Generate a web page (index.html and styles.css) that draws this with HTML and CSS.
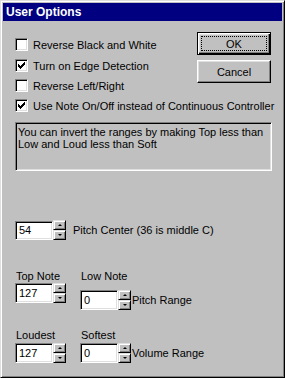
FILE: index.html
```html
<html>
<head>
    <link rel="stylesheet" href="styles.css">
    <title>User Options</title>
</head>
<body>
    <div class="window">
        <div class="title-bar">User Options</div>
        <div class="content">
            <div class="top">
                <div class="options">
                    <div class="option first"><span class="checkbox"></span>Reverse Black and White</div>
                    <div class="option"><span class="checkbox"><svg width="7" height="7" viewBox="0 0 7 7"><path d="M0 2 L2 4 L7 -1 L7 2 L2 7 L0 5 Z" fill="#000"/></svg></span>Turn on Edge Detection</div>
                    <div class="option"><span class="checkbox"></span>Reverse Left/Right</div>
                    <div class="option"><span class="checkbox"><svg width="7" height="7" viewBox="0 0 7 7"><path d="M0 2 L2 4 L7 -1 L7 2 L2 7 L0 5 Z" fill="#000"/></svg></span>Use Note On/Off instead of Continuous Controller</div>
                </div>
                <div class="buttons">
                    <button class="btn btn-default"><span class="focus">OK</span></button>
                    <button class="btn">Cancel</button>
                </div>
            </div>

            <div class="note">You can invert the ranges by making Top less than<br>Low and Loud less than Soft</div>

            <div class="pitch-row">
                <div class="spin-group">
                    <div class="edit">54</div>
                    <div class="spinner"><span class="spin-up"><i class="arrow-up"></i></span><span class="spin-down"><i class="arrow-down"></i></span></div>
                    <span class="trail-label wide">Pitch Center (36 is middle C)</span>
                </div>
            </div>

            <div class="range-row top-row">
                <div class="field">
                    <div class="field-label">Top Note</div>
                    <div class="spin-group">
                        <div class="edit">127</div>
                        <div class="spinner"><span class="spin-up"><i class="arrow-up"></i></span><span class="spin-down"><i class="arrow-down"></i></span></div>
                    </div>
                </div>
                <div class="field field-last">
                    <div class="field-label">Low Note</div>
                    <div class="spin-group lowered">
                        <div class="edit">0</div>
                        <div class="spinner"><span class="spin-up"><i class="arrow-up"></i></span><span class="spin-down"><i class="arrow-down"></i></span></div>
                        <span class="trail-label">Pitch Range</span>
                    </div>
                </div>
            </div>

            <div class="range-row volume-row">
                <div class="field">
                    <div class="field-label">Loudest</div>
                    <div class="spin-group">
                        <div class="edit">127</div>
                        <div class="spinner"><span class="spin-up"><i class="arrow-up"></i></span><span class="spin-down"><i class="arrow-down"></i></span></div>
                    </div>
                </div>
                <div class="field field-last">
                    <div class="field-label">Softest</div>
                    <div class="spin-group">
                        <div class="edit">0</div>
                        <div class="spinner"><span class="spin-up"><i class="arrow-up"></i></span><span class="spin-down"><i class="arrow-down"></i></span></div>
                        <span class="trail-label">Volume Range</span>
                    </div>
                </div>
            </div>
        </div>
    </div>
</body>
</html>
```

FILE: styles.css
```css
body {
    margin: 0;
    background-color: #c0c0c0;
    font-family: "Liberation Sans", Arial, sans-serif;
    font-size: 11px;
    color: #000;
}

.window {
    width: 285px;
    height: 378px;
    box-sizing: border-box;
    padding: 2px;
    border: 1px solid;
    border-color: #dfdfdf #000 #000 #dfdfdf;
    box-shadow: inset 1px 1px #fff, inset -1px -1px #808080;
    background-color: #c0c0c0;
}

.title-bar {
    height: 18px;
    line-height: 18px;
    padding-left: 3px;
    background-color: #000080;
    color: #fff;
    font-weight: bold;
    font-size: 12px;
}

.content {
    padding: 0 11px 0 12px;
}

.top {
    display: flex;
    margin-top: 11px;
}

.options {
    flex: 1;
    min-width: 0;
    margin-top: 6px;
    display: flex;
    flex-direction: column;
    gap: 7px;
    white-space: nowrap;
}

.option {
    display: flex;
    align-items: center;
    height: 13px;
}

.option.first {
    margin-bottom: 1px;
}

.checkbox {
    width: 13px;
    height: 13px;
    flex-shrink: 0;
    box-sizing: border-box;
    margin-right: 5px;
    display: flex;
    align-items: center;
    justify-content: center;
    background-color: #fff;
    border: 1px solid;
    border-color: #808080 #fff #fff #808080;
    box-shadow: inset 1px 1px #000, inset -1px -1px #dfdfdf;
}

.checkbox svg {
    display: block;
    shape-rendering: crispEdges;
}

.buttons {
    width: 74px;
    display: flex;
    flex-direction: column;
    gap: 5px;
}

.btn {
    width: 74px;
    height: 23px;
    padding: 0;
    box-sizing: border-box;
    background-color: #c0c0c0;
    font-family: "Liberation Sans", Arial, sans-serif;
    font-size: 11px;
    color: #000;
    border: 1px solid;
    border-color: #fff #000 #000 #fff;
    box-shadow: inset -1px -1px #808080, inset 1px 1px #dfdfdf;
}

.btn-default {
    border-color: #000;
    box-shadow: inset 1px 1px #fff, inset -1px -1px #000, inset -2px -2px #808080, inset 2px 2px #dfdfdf;
    padding: 3px;
}

.focus {
    display: flex;
    align-items: center;
    justify-content: center;
    height: 100%;
    border: 1px dotted #000;
    box-sizing: border-box;
}

.note {
    margin-top: 10px;
    width: 257px;
    height: 49px;
    box-sizing: border-box;
    padding: 3px 2px;
    line-height: 12px;
    border: 1px solid;
    border-color: #808080 #fff #fff #808080;
    box-shadow: inset 1px 1px #000, inset -1px -1px #dfdfdf;
}

.pitch-row {
    margin-top: 49px;
}

.spin-group {
    display: flex;
    align-items: center;
}

.edit {
    width: 38px;
    height: 20px;
    flex-shrink: 0;
    box-sizing: border-box;
    padding-left: 3px;
    line-height: 18px;
    background-color: #fff;
    border: 1px solid;
    border-color: #808080 #fff #fff #808080;
    box-shadow: inset 1px 1px #000, inset -1px -1px #dfdfdf;
}

.pitch-row .edit {
    height: 19px;
    line-height: 17px;
}

.spinner {
    width: 13px;
    height: 20px;
    flex-shrink: 0;
    display: flex;
    flex-direction: column;
}

.spin-up, .spin-down {
    flex: 1;
    display: flex;
    align-items: center;
    justify-content: center;
    box-sizing: border-box;
    background-color: #c0c0c0;
    border: 1px solid;
    border-color: #dfdfdf #000 #000 #dfdfdf;
    box-shadow: inset 1px 1px #fff, inset -1px -1px #808080;
}

.arrow-up {
    width: 0;
    height: 0;
    border-left: 2px solid transparent;
    border-right: 2px solid transparent;
    border-bottom: 2px solid #000;
}

.arrow-down {
    width: 0;
    height: 0;
    border-left: 2px solid transparent;
    border-right: 2px solid transparent;
    border-top: 2px solid #000;
}

.trail-label {
    margin-left: 1px;
    white-space: nowrap;
}

.trail-label.wide {
    margin-left: 7px;
}

.range-row {
    display: flex;
    align-items: flex-start;
}

.top-row {
    margin-top: 30px;
}

.volume-row {
    margin-top: 19px;
}

.field {
    width: 65px;
    flex-shrink: 0;
}

.field-last {
    width: auto;
}

.field-label {
    height: 12px;
    line-height: 12px;
    padding-left: 1px;
}

.top-row .spin-group {
    margin-top: 1px;
}

.top-row .spin-group.lowered {
    margin-top: 8px;
}

.volume-row .spin-group {
    margin-top: 2px;
}
```
